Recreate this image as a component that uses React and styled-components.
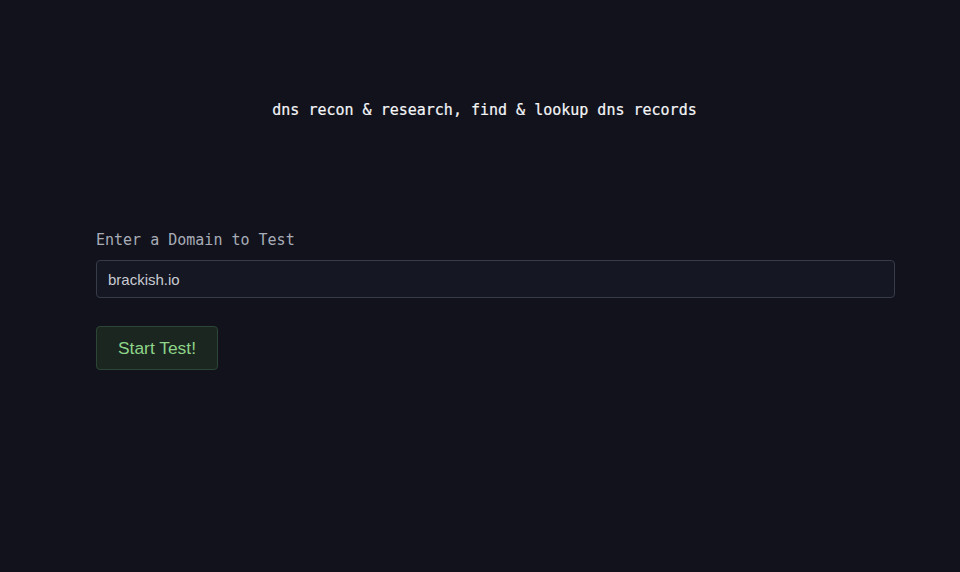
import styled, {createGlobalStyle} from "styled-components";

const GlobalStyle = createGlobalStyle`
  html, body {
    margin: 0;
    padding: 0;
    background-color: #11121c;
  }

  body {
    min-height: 572px;
    font-family: "Liberation Sans", Arial, sans-serif;
  }
`

const Page = styled.div`
  min-height: 572px;
  background-color: #11121c;
  display: flex;
  flex-direction: column;
`

const Tagline = styled.h1`
  margin: 0;
  padding-top: 99px;
  padding-left: 9px;
  text-align: center;
  font-family: "DejaVu Sans Mono", monospace;
  font-weight: 400;
  font-size: 15px;
  line-height: 22px;
  color: #f4f5f7;
  -webkit-text-stroke: 0.2px #f4f5f7;
`

const Form = styled.form`
  width: 799px;
  margin: 109px 0 0 96px;
  display: flex;
  flex-direction: column;
  align-items: flex-start;
`

const Label = styled.label`
  font-family: "DejaVu Sans Mono", monospace;
  font-size: 15px;
  line-height: 20px;
  color: #a8acb6;
  margin-bottom: 10px;
`

const DomainInput = styled.input`
  box-sizing: border-box;
  width: 100%;
  height: 38px;
  padding: 0 11px;
  background-color: #151722;
  border: 1px solid #383b48;
  border-radius: 4px;
  color: #c9cbd2;
  font-family: "Liberation Sans", Arial, sans-serif;
  font-size: 15px;
  outline: none;
`

const StartButton = styled.button`
  margin-top: 28px;
  box-sizing: border-box;
  width: 122px;
  height: 44px;
  background-color: #1b2620;
  border: 1px solid #2d4534;
  border-radius: 4px;
  color: #8ed489;
  font-family: "Liberation Sans", Arial, sans-serif;
  font-size: 17.4px;
  cursor: pointer;
`

export default function App() {
  return (
    <Page>
      <GlobalStyle/>
      <Tagline>dns recon &amp; research, find &amp; lookup dns records</Tagline>
      <Form onSubmit={e => e.preventDefault()}>
        <Label htmlFor="domain">Enter a Domain to Test</Label>
        <DomainInput id="domain" defaultValue="brackish.io"/>
        <StartButton type="submit">Start Test!</StartButton>
      </Form>
    </Page>
  )
}
